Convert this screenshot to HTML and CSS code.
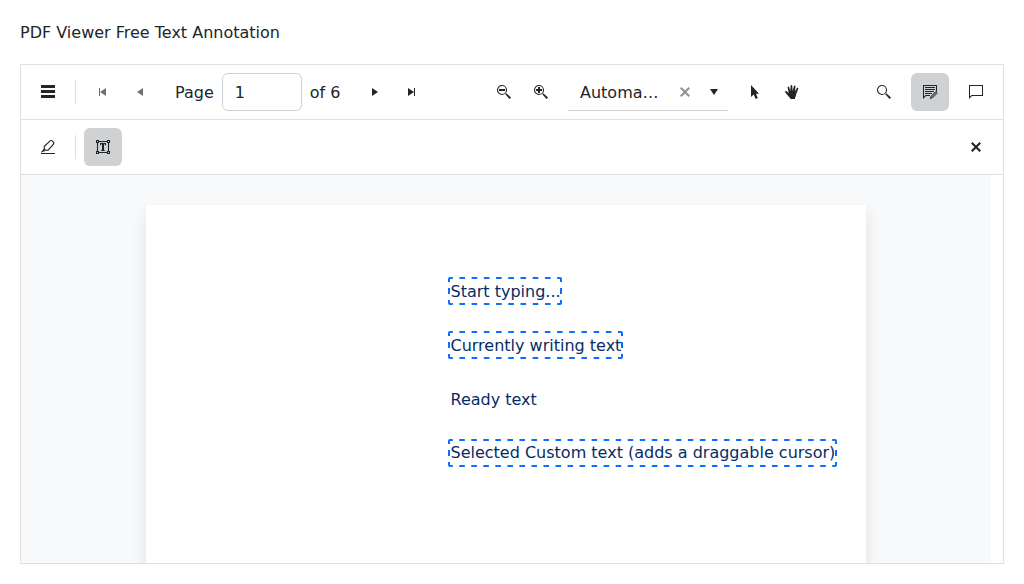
FILE: index.html
```html
<!DOCTYPE html>
<html lang="en">
<head>
<meta charset="utf-8">
<title>PDF Viewer Free Text Annotation</title>
<link rel="stylesheet" href="styles.css">
</head>
<body>
<h1 class="title">PDF Viewer Free Text Annotation</h1>
<main class="viewer">
  <div class="toolbar">
    <button class="btn" aria-label="Menu"><svg class="icon" viewBox="0 0 16 16"><path d="M1 1h14v3H1zM1 6h14v3H1zM1 11h14v3H1z"/></svg></button>
    <span class="separator"></span>
    <div class="pager">
      <button class="btn faded" aria-label="First"><svg class="icon" viewBox="0 0 16 16"><path d="M4 4h1v8H4zM11 4v8L5 8z"/></svg></button>
      <button class="btn joined faded" aria-label="Previous"><svg class="icon" viewBox="0 0 16 16"><path d="M11 4v8L5 8z"/></svg></button>
      <label class="page-label"><span class="label-text">Page</span> <input class="page-input" value="1"> <span class="label-text">of 6</span></label>
      <button class="btn" aria-label="Next"><svg class="icon" viewBox="0 0 16 16"><path d="M5 4v8l6-4z"/></svg></button>
      <button class="btn joined" aria-label="Last"><svg class="icon" viewBox="0 0 16 16"><path d="M4 4v8l6-4zM10 4h1v8h-1z"/></svg></button>
    </div>
    <span class="spacer"></span>
    <div class="zoom">
      <button class="btn" aria-label="Zoom out"><svg class="icon" viewBox="0 0 16 16"><circle class="line" cx="6" cy="6" r="4.5"/><path d="M3 5h6v2H3zM9.3 10.2l1-1 4.7 4.3-1.5 1.5z"/></svg></button>
      <button class="btn joined" aria-label="Zoom in"><svg class="icon" viewBox="0 0 16 16"><circle class="line" cx="6" cy="6" r="4.5"/><path d="M3 5h2V3h2v2h2v2H7v2H5V7H3zM9.3 10.2l1-1 4.7 4.3-1.5 1.5z"/></svg></button>
      <div class="combo">
        <span class="combo-text label-text">Automa…</span>
        <svg class="icon clear" viewBox="0 0 16 16"><path d="M13 4.4 11.6 3 8 6.6 4.4 3 3 4.4 6.6 8 3 11.6 4.4 13 8 9.4l3.6 3.6 1.4-1.4L9.4 8z"/></svg>
        <svg class="icon caret" viewBox="0 0 16 16"><path d="M4 5h8l-4 6z"/></svg>
      </div>
    </div>
    <div class="pointer-tools">
      <button class="btn" aria-label="Select"><svg class="icon" viewBox="0 0 16 16"><path d="M4 1v12l2.7-2.5L8.6 15l2.2-1-1.9-4.2H12z"/></svg></button>
      <button class="btn joined" aria-label="Pan"><svg class="icon" viewBox="0 0 16 16"><path d="M5.3 13.2 1.3 8.4c-.7-1 .4-1.8 1.3-1.1L4.7 9 3.6 3.5c-.2-1.2 1.2-1.5 1.5-.4L6.3 7l.3-5c.1-1.2 1.7-1.2 1.7 0L8.6 7l1.3-4.7c.3-1.1 1.8-.8 1.6.4L10.8 7.5l2-3.3c.6-1 1.8-.3 1.4.7l-2.1 5.5c-.2 1.7-.6 2.6-1.1 3.3V15H6.3v-.8z"/></svg></button>
    </div>
    <span class="spacer"></span>
    <button class="btn" aria-label="Search"><svg class="icon" viewBox="0 0 16 16"><circle class="line" cx="6" cy="6" r="4.5"/><path d="M9.3 10.2l1-1 4.7 4.3-1.5 1.5z"/></svg></button>
    <button class="btn selected" aria-label="Annotate"><svg class="icon" viewBox="0 0 16 16"><path d="M1 1h14v6.5l-1 1V2H2v10.6L3.6 11H8v1H4l-3 3zM3 3h10v1H3zM3 5h10v1H3zM3 7h9v1H3zM3 9h7v1H3z"/><path class="pencil" d="M8.2 14.8 9 12.2l4.7-4.7 1.6 1.6-4.6 4.7z"/></svg></button>
    <button class="btn" aria-label="Comments"><svg class="icon" viewBox="0 0 16 16"><path d="M1 1h14v11H4l-3 3zM2 2v10.6L3.6 11H14V2z" fill-rule="evenodd"/></svg></button>
  </div>
  <div class="toolbar">
    <button class="btn" aria-label="Highlight"><svg class="icon" viewBox="0 0 16 16"><path d="M1 14h14v1H1z"/><path class="line" d="M4.2 7.5 10.3 1.7Q12 1 13.8 3.7L13.5 5.2 8 11.2 5.6 11.3 4.4 10zM4.2 10 2.2 12.6 5.6 11.3"/></svg></button>
    <span class="separator"></span>
    <button class="btn selected" aria-label="Free text"><svg class="icon" viewBox="0 0 16 16"><path class="line" d="M3.5 2.5h9M3.5 13.5h9M2.5 3.5v9M13.5 3.5v9M1.5 1.5h2v2h-2zM12.5 1.5h2v2h-2zM1.5 12.5h2v2h-2zM12.5 12.5h2v2h-2z"/><path d="M5 4h6v2.3h-1V5.2H9V11h.8v1H6.2v-1H7V5.2H6v1.1H5z"/></svg></button>
    <span class="spacer"></span>
    <button class="btn" aria-label="Close"><svg class="icon" viewBox="0 0 16 16"><path d="M13 4.5 11.5 3 8 6.5 4.5 3 3 4.5 6.5 8 3 11.5 4.5 13 8 9.5l3.5 3.5 1.5-1.5L9.5 8z"/></svg></button>
  </div>
  <div class="canvas">
    <div class="page">
      <div class="annotation outlined placeholder">Start typing...</div>
      <div class="annotation outlined">Currently writing text</div>
      <div class="annotation">Ready text</div>
      <div class="annotation outlined custom">Selected Custom text (adds a draggable cursor)</div>
    </div>
  </div>
</main>
</body>
</html>
```
FILE: styles.css
```css
* { box-sizing: border-box; }
body {
  margin: 0;
  padding: 20px;
  background: #fff;
  color: #212529;
  font: 16px/24px "DejaVu Sans", sans-serif;
}
.title { height: 24px; margin: 0 0 20px; font-size: 16px; font-weight: 400; line-height: 26px; }
.viewer {
  display: flex;
  flex-direction: column;
  height: 500px;
  border: 1px solid #dfe0e1;
  overflow: hidden;
}
.toolbar {
  display: flex;
  flex: none;
  align-items: center;
  gap: 8px;
  height: 55px;
  padding: 0 8px;
  border-bottom: 1px solid #dfe0e1;
}
.btn {
  display: flex;
  flex: none;
  align-items: center;
  justify-content: center;
  width: 38px;
  height: 38px;
  padding: 0;
  border: 0;
  border-radius: 6px;
  background: none;
  color: inherit;
}
.joined { margin-left: -1px; }
.faded { opacity: .65; }
.selected { background: #d0d1d2; }
.icon { display: block; flex: none; width: 16px; height: 16px; fill: currentColor; }
.line { fill: none; stroke: currentColor; stroke-width: 1.1; }
.pencil { fill: #6b6d70; stroke: currentColor; stroke-width: .6; }
.separator { width: 1px; height: 24px; background: #dfe0e1; }
.spacer { flex: 1; }
.pager, .zoom, .pointer-tools { display: flex; align-items: center; }
.label-text { padding-top: 2px; }
.page-label {
  display: flex;
  align-items: center;
  gap: 8px;
  width: 197px;
  padding-left: 16px;
  white-space: nowrap;
}
.page-input {
  width: 80px;
  height: 38px;
  padding: 6px 12px;
  border: 1px solid #ced0d2;
  border-radius: 6px;
  background: #fff;
  color: inherit;
  font: inherit;
}
.combo {
  display: flex;
  align-items: center;
  width: 160px;
  height: 38px;
  margin-left: 8px;
  padding-left: 12px;
  border-bottom: 1px solid #ced0d2;
}
.combo-text { width: 80px; white-space: nowrap; }
.clear { margin-left: 17px; opacity: .5; }
.caret { margin-left: 13px; }
.canvas {
  flex: 1;
  min-height: 0;
  margin-right: 12px;
  padding: 30px 125px 0;
  background: #f8f9fa;
  overflow: hidden;
}
.page {
  display: flex;
  flex-direction: column;
  align-items: flex-start;
  gap: 26px;
  width: 720px;
  height: 900px;
  padding: 72px 0 0 302px;
  background: #fff;
  box-shadow: 0 8px 16px rgba(0, 0, 0, .1);
}
.annotation {
  height: 28px;
  border: 2px solid transparent;
  border-radius: 2px;
  color: #052c65;
  line-height: 26px;
  text-indent: .5px;
  white-space: nowrap;
}
.placeholder { width: 114px; }
.custom { line-height: 24px; }
.outlined {
  --across: linear-gradient(90deg, #0d6efd 25%, transparent 25% 75%, #0d6efd 75%);
  --down: linear-gradient(#0d6efd 25%, transparent 25% 75%, #0d6efd 75%);
  background-image: var(--across), var(--across), var(--down), var(--down);
  background-size: 12px 2px, 12px 2px, 2px 12px, 2px 12px;
  background-position: 0 -2px, 0 calc(100% + 2px), -2px 0, calc(100% + 2px) 0;
  background-repeat: round no-repeat, round no-repeat, no-repeat round, no-repeat round;
}
```
